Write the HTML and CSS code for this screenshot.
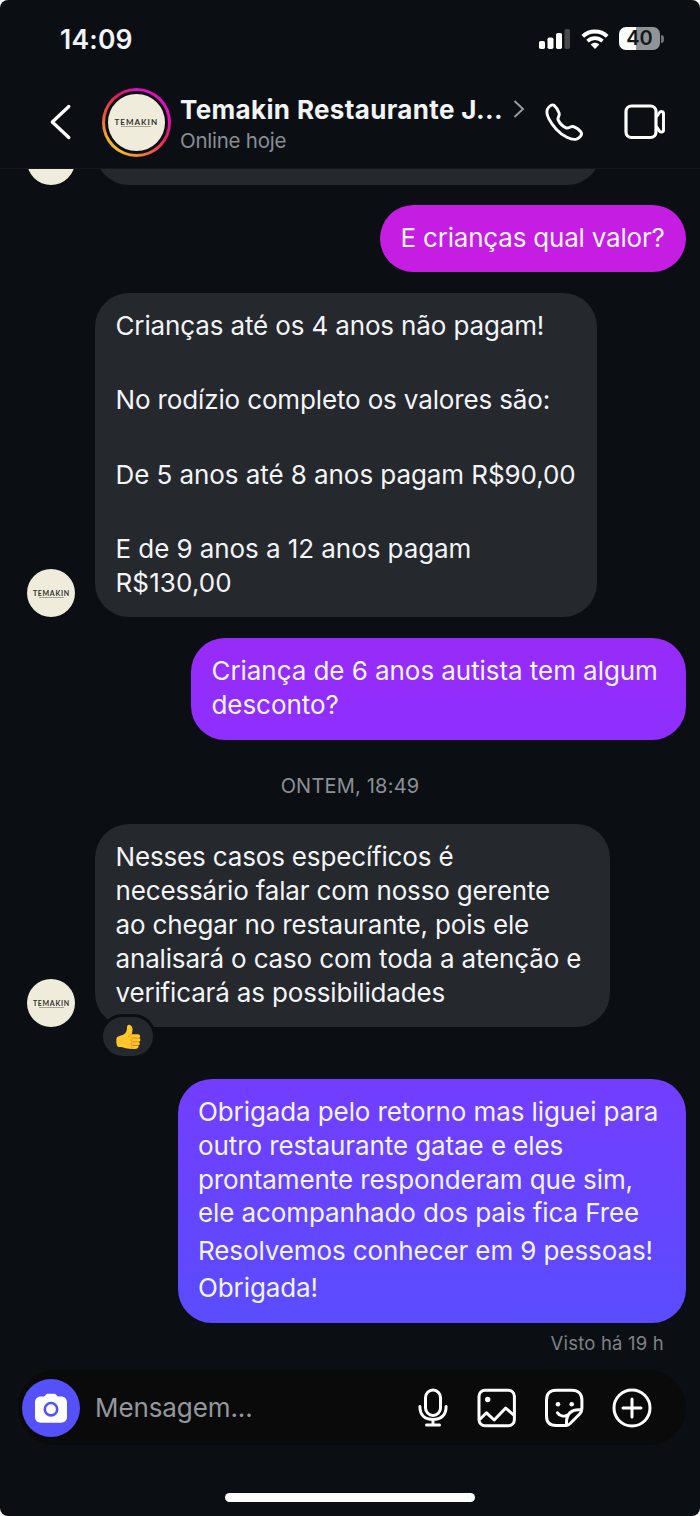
FILE: index.html
```html
<!DOCTYPE html>
<html lang="pt-BR">
<head>
<meta charset="utf-8">
<title>Temakin – Mensagens</title>
<link rel="stylesheet" href="styles.css">
</head>
<body>
<main class="phone">
  <header class="top">
    <div class="status">
      <span class="clock">14:09</span>
      <div class="indicators">
        <svg class="signal" width="32" height="20" viewBox="0 0 32 20"><rect x="0" y="12" width="6" height="8" rx="1.8" fill="#fff"/><rect x="8.5" y="8.5" width="6" height="11.5" rx="1.8" fill="#fff"/><rect x="17" y="4" width="6" height="16" rx="1.8" fill="#fff"/><rect x="25.5" y="0" width="5.500" height="20" rx="1.8" fill="#474a4d"/></svg>
        <svg class="wifi" width="28" height="20" viewBox="0 0 28 20"><path d="M1.8 7.4C8.5.9 19.500.9 26.200 7.400" fill="none" stroke="#fff" stroke-width="4"/><path d="M6.500 12.100c4.300-4 10.700-4 15 0" fill="none" stroke="#fff" stroke-width="3.600"/><path d="M9.700 15.500c2.500-2.200 6.100-2.200 8.600 0L14 20z" fill="#fff"/></svg>
        <div class="battery"><span class="level">40</span><i class="tip"></i></div>
      </div>
    </div>
    <div class="bar">
      <svg class="back" width="24" height="38" viewBox="0 0 24 38"><path d="M19.800 3.500L3.300 19l16.500 15.500" fill="none" stroke="#fff" stroke-width="3.300" stroke-linecap="round" stroke-linejoin="round"/></svg>
      <div class="story"><div class="avatar large"><b>TEMAKIN</b><i></i></div></div>
      <div class="who">
        <div class="name"><span>Temakin Restaurante J...</span><svg width="12" height="20" viewBox="0 0 12 20"><path d="M1.500 2l8.500 8-8.500 8" fill="none" stroke="#9a9da1" stroke-width="1.900"/></svg></div>
        <div class="seen">Online hoje</div>
      </div>
      <svg class="call" width="40" height="40" viewBox="0 0 40 40"><path d="M3.300 7.500C4.800 4.200 8.100 1.900 10.100 3.300C12.200 5 14.300 9.100 15.100 11C16.200 13.900 13 15.200 14.200 18C15.500 20.700 19 24.500 22 25.800C25 27 26.500 23.500 29.500 24.700C31.500 25.500 35.500 27.900 37 30.100C38.700 32.500 35.800 36 32.500 37.100C27.500 38.600 18.500 34 12.500 27.500C6.500 21 1.400 12.400 3.300 7.500Z" fill="none" stroke="#fff" stroke-width="2.900" stroke-linejoin="round"/></svg>
      <svg class="video" width="42" height="36" viewBox="0 0 42 36"><rect x="2" y="2" width="30" height="31.500" rx="5.500" fill="none" stroke="#fff" stroke-width="3.200"/><path d="M32.500 13l3-4.500c1.200-1.500 4-1.200 4 .8v17c0 2-2.800 2.300-4 .8l-3-4.500" fill="none" stroke="#fff" stroke-width="2.900" stroke-linejoin="round"/></svg>
    </div>
  </header>

  <section class="chat">
    <div class="row clipped"><div class="avatar"></div><div class="bubble in"></div></div>
    <div class="row mine"><div class="bubble magenta"><p>E crianças qual valor?</p></div></div>
    <div class="row theirs">
      <div class="avatar"><b>TEMAKIN</b><i></i></div>
      <div class="bubble in prices"><p>Crianças até os 4 anos não pagam!</p><p class="next">No rodízio completo os valores são:</p><p class="next wide">De 5 anos até 8 anos pagam R$90,00</p><p class="next wide">E de 9 anos a 12 anos pagam<br><span class="sum">R$130,00</span></p></div>
    </div>
    <div class="row mine"><div class="bubble violet"><p>Criança de 6 anos autista tem algum<br>desconto?</p></div></div>
    <div class="date">ONTEM, 18:49</div>
    <div class="row theirs">
      <div class="avatar"><b>TEMAKIN</b><i></i></div>
      <div class="bubble in answer"><p>Nesses casos específicos é<br>necessário falar com nosso gerente<br>ao chegar no restaurante, pois ele<br>analisará o caso com toda a atenção e<br>verificará as possibilidades</p>
        <div class="reaction"><svg width="25" height="26" viewBox="0 0 26 27"><path d="M.6 14.500C1.500 12.200 6 12 8 10.800C10.500 9.300 11.300 7.200 11.400 4.200C11.400 1.600 12.200.5 13.800.7C17.500 1.200 18 6.500 16.300 10.600H22.600C25.600 10.600 25.800 14 24 14.600C26 15.300 25.700 18.200 23.900 18.600C25.300 19.500 24.800 21.900 23.100 22.200C24 23.300 23.400 25.500 21.500 25.600C17 26.400 11.500 26 8.500 24.800C5.500 23.500 2.500 25 1.200 22.900C.2 21 .1 16.500.6 14.500Z" fill="#ffc62d"/><path d="M17 14.500h7M17 18.500h7M16.800 22.200h6.300" stroke="#e58a12" stroke-width="1.100" fill="none"/><path d="M16.300 10.600c-1.800.4-3.300 1.600-3.300 3.200M17 14.500c-2 .8-1.800 3.300 0 4-1.600.8-1.600 3 0 3.700-1.200.8-1 2.300.2 3.400" stroke="#e9951b" stroke-width="1" fill="none"/></svg></div>
      </div>
    </div>
    <div class="row mine last"><div class="bubble indigo"><p>Obrigada pelo retorno mas liguei para<br>outro restaurante gatae e eles<br>prontamente responderam que sim,<br>ele acompanhado dos pais fica Free</p><p class="near">Resolvemos conhecer em 9 pessoas!</p><p class="near">Obrigada!</p></div></div>
    <div class="receipt">Visto há 19 h</div>
  </section>

  <footer class="composer">
    <div class="camera"><svg width="32" height="30" viewBox="0 0 32 30"><path d="M6 3.500h2.800c1.300 0 1.700-2.800 4-2.800h6.400c2.300 0 2.700 2.800 4 2.800H26c3.500 0 6 2.300 6 5.800V24c0 3.500-2.500 5.700-6 5.700H6C2.500 29.700 0 27.500 0 24V9.300c0-3.500 2.500-5.800 6-5.800z" fill="#fff"/><circle cx="16" cy="16.200" r="6.200" fill="none" stroke="#5451fa" stroke-width="2.600"/></svg></div>
    <span class="placeholder">Mensagem...</span>
    <div class="tools">
      <svg width="30" height="40" viewBox="0 0 30 40"><g fill="none" stroke="#fff" stroke-width="3" stroke-linecap="round"><rect x="7.500" y="2" width="15" height="25.500" rx="7.500"/><path d="M1.900 18.500c0 8.500 4.800 13 13.100 13s13.100-4.500 13.100-13M15 31.500v5M8.500 36.900h13"/></g></svg>
      <svg width="40" height="40" viewBox="0 0 40 40"><g fill="none" stroke="#fff" stroke-width="3" stroke-linejoin="round"><rect x="3" y="2.300" width="35.400" height="35.400" rx="6"/><path d="M3.700 31.500l6.800-6.700 7.700 7.200L29.700 20l8.500 7.500"/></g><circle cx="11.700" cy="11.500" r="2.700" fill="#fff"/></svg>
      <svg width="40" height="40" viewBox="0 0 40 40"><g fill="none" stroke="#fff" stroke-width="3" stroke-linecap="round" stroke-linejoin="round"><path d="M22.500 37.500H12C5.500 37.500 2.500 34 2.500 28V12C2.500 5.800 5.800 2.300 12 2.300h16c6.200 0 9.900 3.500 9.900 9.700v8.500c0 2.500-.5 3.500-2 5.200l-9.700 9.800c-1.200 1.200-2 2-3.700 2v-3c0-9 5-13.500 14.900-12.500M13.500 24.800c2.300 3.400 6.500 4 10 2.200"/></g><circle cx="14" cy="16.300" r="2.300" fill="#fff"/><circle cx="27.700" cy="16.300" r="2.300" fill="#fff"/></svg>
      <svg width="40" height="40" viewBox="0 0 40 40"><g fill="none" stroke="#fff" stroke-width="3" stroke-linecap="round"><circle cx="20" cy="20" r="18"/><path d="M20 11v18M11 20h18"/></g></svg>
    </div>
  </footer>
  <div class="home"></div>
</main>
</body>
</html>
```
FILE: styles.css
```css
* { box-sizing: border-box; }
body { margin: 0; background: #fff; font-family: Inter, "Liberation Sans", sans-serif; }
svg { display: block; flex: none; overflow: visible; }
p { margin: 0; }

.phone { width: 700px; height: 1516px; background: #0b0f13; border-radius: 8px; overflow: hidden; color: #f2f4f6; display: flex; flex-direction: column; }

.top { flex: none; height: 169px; border-bottom: 1px solid #16191e; }
.status { height: 76px; padding: 1px 36px 0 60px; display: flex; justify-content: space-between; align-items: center; }
.clock { font-size: 26.5px; font-weight: 600; letter-spacing: .2px; padding-top: 1px; }
.indicators { display: flex; align-items: center; }
.wifi { margin-left: 10px; }
.battery { display: flex; align-items: center; margin-left: 10px; gap: 1px; }
.level { width: 41px; height: 23px; border-radius: 7px; background: linear-gradient(90deg, #fff 42%, #919496 42%); color: #15181b; font-size: 20px; line-height: 23px; font-weight: 600; text-align: center; }
.tip { width: 3px; height: 8px; border-radius: 0 3px 3px 0; background: #6f7274; }

.bar { height: 92px; padding-left: 49px; display: flex; align-items: center; }
.story { flex: none; width: 69px; height: 69px; margin-left: 28.500px; padding: 3px; border-radius: 50%; background: conic-gradient(#dc10c8, #e211c2 20%, #e91b66 33%, #f36e35 45%, #f8bb25 58%, #f8b026 67%, #ec553a 79%, #df195f 90%, #dc10c8); }
.avatar { flex: none; width: 48px; height: 48px; border-radius: 50%; background: #f0ecdb; color: #303030; display: flex; flex-direction: column; align-items: center; justify-content: center; }
.avatar b { font: 700 7px/8px Lato, sans-serif; letter-spacing: .7px; margin-right: -.7px; }
.avatar i { width: 25px; height: 1px; background: #a5a296; }
.avatar.large { width: 63px; height: 63px; border: 3.500px solid #0b0f13; }
.avatar.large b { font-size: 8px; letter-spacing: 1px; }
.avatar.large i { width: 30px; }
.who { width: 345px; margin: 2px 0 0 9.500px; }
.name { display: flex; align-items: center; justify-content: space-between; height: 32px; font-size: 26px; font-weight: 700; letter-spacing: .35px; white-space: nowrap; }
.seen { font-size: 20.500px; line-height: 28px; letter-spacing: -.25px; color: #898d93; position: relative; top: 1.500px; }
.call { margin-left: 19px; }
.video { margin-left: 40px; }

.chat { flex: none; height: 1201px; overflow: hidden; display: flex; flex-direction: column; }
.row { display: flex; align-items: flex-end; flex: none; padding: 0 14px 0 27px; margin-bottom: 20.500px; }
.mine { justify-content: flex-end; }
.theirs, .clipped { gap: 20px; }
.clipped { height: 15.500px; }
.clipped .bubble { width: 506px; height: 90px; }
.bubble { position: relative; border-radius: 34px; padding: 16.400px 20.500px 16px; font-size: 26px; line-height: 33.850px; white-space: nowrap; }
.in { background: #25282d; }
.magenta { width: 306px; height: 67px; background: #c51de2; letter-spacing: -.2px; }
.violet { width: 495px; height: 102px; background: linear-gradient(#982bf8, #8d2fff); letter-spacing: -.06px; }
.indigo { width: 508px; height: 244px; background: linear-gradient(#733dff, #5a4cff); letter-spacing: -.1px; padding-left: 20px; }
.prices { width: 502px; height: 324.500px; letter-spacing: -.14px; }
.answer { width: 515px; height: 203px; letter-spacing: -.16px; }
.next { margin-top: 40.500px; }
.wide { letter-spacing: -.07px; }
.sum { letter-spacing: .12px; }
.near { margin-top: 3.300px; }
.date { flex: none; height: 50px; margin: 1px 0 13px; text-align: center; font-size: 20px; line-height: 50px; letter-spacing: .2px; color: #8c9096; }
.reaction { position: absolute; left: 5px; top: 190px; width: 56px; height: 45px; border: 3px solid #0b0f13; border-radius: 23px; background: #25282d; display: flex; align-items: center; justify-content: center; }
.last { margin: 31px 0 5px; }
.receipt { padding-right: 36px; text-align: right; font-size: 18.500px; line-height: 30px; letter-spacing: .2px; color: #7e8287; }

.composer { flex: none; height: 75px; margin: 0 14px 0 18px; padding: 0 34px 0 4px; border-radius: 38px; background: #0a0a0b; display: flex; align-items: center; }
.camera { width: 58px; height: 58px; border-radius: 50%; background: #5451fa; display: flex; align-items: center; justify-content: center; }
.placeholder { margin-left: 15px; font-size: 26px; letter-spacing: -.1px; color: #94979b; }
.tools { margin-left: auto; display: flex; align-items: center; gap: 28px; }
.home { flex: none; width: 250px; height: 9px; margin: 48px auto 0; border-radius: 5px; background: #fff; }
```
